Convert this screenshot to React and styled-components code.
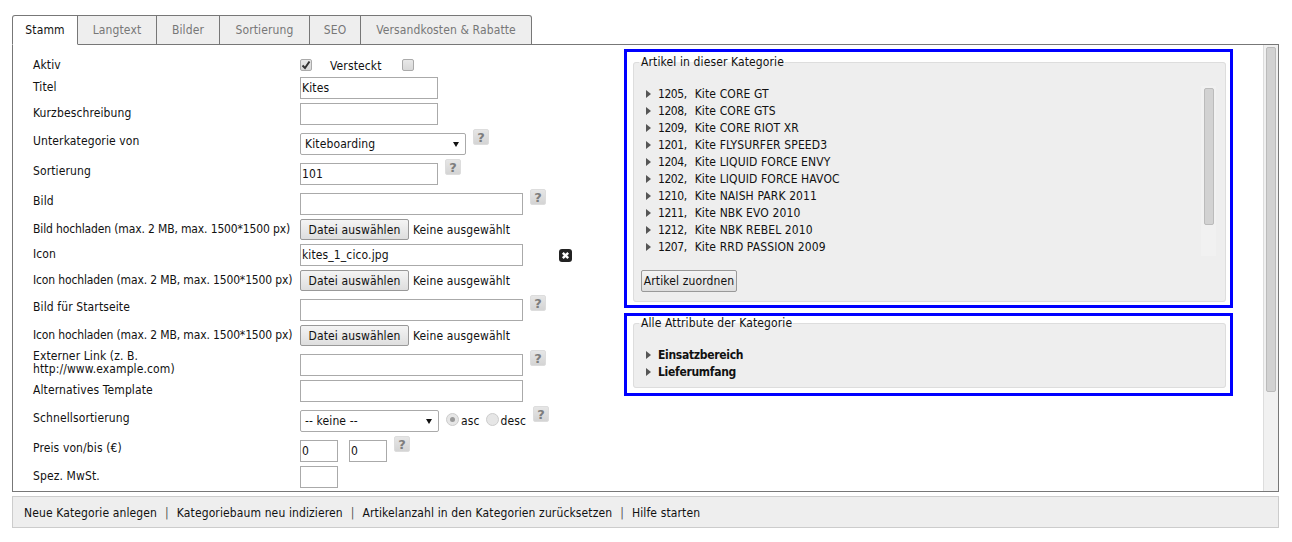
import React from 'react';
import styled, { createGlobalStyle } from 'styled-components';

const Global = createGlobalStyle`
  html, body { margin: 0; padding: 0; background: #fff; }
  body { font-family: "DejaVu Sans Condensed", "DejaVu Sans", sans-serif; font-size: 12px; letter-spacing: 0.12px; color: #111; overflow: hidden; }
`;
const Page = styled.div`
  width: 1267px; margin-left: 12px; padding-top: 15px;
`;
const Tabs = styled.div`
  display: flex; height: 30px; margin-bottom: -1px; position: relative; z-index: 1;
`;
const Tab = styled.div`
  height: 30px; box-sizing: border-box; display: flex; align-items: center; justify-content: center;
  width: ${p => p.$w}px;
  border: 1px solid #777; border-left-width: ${p => p.$first ? 1 : 0}px;
  border-bottom-color: ${p => p.$active ? '#fff' : '#777'};
  background: ${p => p.$active ? '#fff' : '#eee'};
  color: ${p => p.$active ? '#111' : '#777'};
  border-radius: ${p => p.$first ? '3px 0 0 0' : p.$last ? '0 3px 0 0' : '0'};
`;
const Panel = styled.div`
  height: 448px; box-sizing: border-box; border: 1px solid #777; display: flex; overflow: hidden;
`;
const Form = styled.div`
  width: 611px; flex: none; padding: 10px 0 0 20px; box-sizing: border-box;
`;
const Row = styled.div`
  display: grid; grid-template-columns: 267px 1fr; grid-template-rows: 22px; align-items: center; height: 22px; margin-top: ${p => p.$gap || 0}px;
`;
const Label = styled.div`
  line-height: 13px; margin-bottom: ${p => p.$up || 0}px; max-width: ${p => p.$max || 267}px; white-space: ${p => p.$max ? 'normal' : 'nowrap'};
  letter-spacing: ${p => p.$tight ? '-0.14px' : 'inherit'};
`;
const Controls = styled.div`
  display: flex; align-items: center; height: 22px;
`;
const Text = styled.input.attrs({ type: 'text' })`
  box-sizing: border-box; height: 22px; width: ${p => p.$w}px; margin: 0 ${p => p.$mr || 0}px 0 0;
  border: 1px solid #aaa; padding: 0 1px; font: inherit; letter-spacing: inherit; color: #111; background: #fff; outline: none;
`;
const SelectBox = styled.div`
  box-sizing: border-box; height: 22px; width: ${p => p.$w}px; border: 1px solid #aaa; border-radius: 2px;
  display: flex; align-items: center; justify-content: space-between; padding: 0 4px; background: #fff;
`;
const Caret = styled.span`
  width: 0; height: 0; border-left: 3px solid transparent; border-right: 3px solid transparent; border-top: 5px solid #111; margin-right: 2px;
`;
const FileBtn = styled.button`
  box-sizing: border-box; height: 21px; width: 109px; padding: 0; font: inherit; letter-spacing: inherit; color: #111; margin: 0 4px 1px 0;
  border: 1px solid #999; border-radius: 2px; background: linear-gradient(#f4f4f4, #dedede);
`;
const Help = styled.span`
  box-sizing: border-box; width: 16px; height: 16px; margin-left: 7px; margin-bottom: 14px;
  background: linear-gradient(#e6e6e6, #d4d4d4); border: 1px solid #ddd; border-radius: 2px;
  display: flex; align-items: center; justify-content: center; color: #7d7d7d; font: bold 13px "DejaVu Sans", sans-serif; flex: none;
`;
const Check = styled.span`
  box-sizing: border-box; width: 12px; height: 12px; border: 1px solid #aaa; border-radius: 2px; background: linear-gradient(#e8e8e8, #d8d8d8);
  display: flex; align-items: center; justify-content: center; flex: none;
  margin: 0 0 3px ${p => p.$ml || 0}px;
`;
const Hidden = styled.span`
  margin-left: 18px; width: 55px; flex: none;
`;
const Radio = styled.span`
  box-sizing: border-box; width: 13px; height: 13px; border: 1px solid #ccc; border-radius: 50%; background: #e6e6e6;
  display: flex; align-items: center; justify-content: center; flex: none; margin: 0 2px 4px ${p => p.$ml}px;
  &::after { content: ''; display: ${p => p.$on ? 'block' : 'none'}; width: 5px; height: 5px; border-radius: 50%; background: #999; }
`;
const Clear = styled.svg`
  width: 13px; height: 13px; margin-left: 36px; flex: none;
`;
const Side = styled.div`
  width: 609px; flex: none; padding-top: 4px; box-sizing: border-box;
`;
const Group = styled.section`
  box-sizing: border-box; border: 3px solid #00f; height: ${p => p.$h}px; margin-bottom: 5px;
  padding: ${p => p.$pt}px 4px ${p => p.$pb}px 6px;
`;
const Field = styled.fieldset`
  box-sizing: border-box; height: 100%; margin: 0; background: #eee; border: 1px solid #ddd; border-radius: 3px; padding: 0 0 0 5px; min-width: 0;
`;
const Legend = styled.legend`
  padding: 0 1px 0 2px; line-height: 14px;
`;
const ListWrap = styled.div`
  display: flex; height: ${p => p.$h}px; margin-top: 16px;
`;
const List = styled.ul`
  list-style: none; margin: 0; padding: 0 0 0 7px; flex: 1;
`;
const Item = styled.li`
  display: flex; align-items: center; height: 17px; white-space: pre;
  font-weight: ${p => p.$bold ? 700 : 400}; letter-spacing: ${p => p.$bold ? '-0.3px' : 'inherit'};
`;
const ArticleNo = styled.span`
  letter-spacing: -0.45px; margin-right: 8px;
`;
const Arrow = styled.span`
  width: 0; height: 0; border-top: 4px solid transparent; border-bottom: 4px solid transparent; border-left: 5px solid #555; margin-right: 7px; flex: none;
`;
const Track = styled.div`
  box-sizing: border-box; width: 15px; height: 170px; margin: 1px 9px 0 0; background: #f1f1f1; padding: 2px 2px 2px 3px; flex: none;
`;
const Thumb = styled.div`
  height: 137px; background: #d2d2d2; border: 1px solid #bbb; border-radius: 2px; box-sizing: border-box;
`;
const Assign = styled.button`
  box-sizing: border-box; height: 22px; width: 96px; margin: 14px 0 0 2px; padding: 0; font: inherit; letter-spacing: inherit; color: #111;
  border: 1px solid #999; border-radius: 2px; background: linear-gradient(#f4f4f4, #dedede); display: block;
`;
const PageScroll = styled.div`
  width: 15px; background: #f1f1f1; border-left: 1px solid #ddd; box-sizing: border-box; padding: 2px; flex: none; margin-left: auto;
`;
const PageThumb = styled.div`
  height: 345px; background: #d2d2d2; border: 1px solid #bbb; border-radius: 2px; box-sizing: border-box;
`;
const Footer = styled.div`
  box-sizing: border-box; height: 32px; margin-top: 4px; background: #eee; border: 1px solid #ccc; display: flex; align-items: center; padding-left: 11px; gap: 8px;
`;
const FooterLink = styled.span`
  margin-top: 2px;
`;
const Sep = styled.span` color: #555; margin-top: 2px; `;

const Q = () => <Help>?</Help>;
const Tick = () => <svg width="10" height="10" viewBox="0 0 10 10"><path d="M1.5 5.5 L4 8 L8.5 1.5" fill="none" stroke="#333" strokeWidth="2" /></svg>;

const articles = [['1205,','Kite CORE GT'],['1208,','Kite CORE GTS'],['1209,','Kite CORE RIOT XR'],['1201,','Kite FLYSURFER SPEED3'],['1204,','Kite LIQUID FORCE ENVY'],['1202,','Kite LIQUID FORCE HAVOC'],['1210,','Kite NAISH PARK 2011'],['1211,','Kite NBK EVO 2010'],['1212,','Kite NBK REBEL 2010'],['1207,','Kite RRD PASSION 2009']];
const tabs = [['Stamm',66],['Langtext',79],['Bilder',63],['Sortierung',90],['SEO',51],['Versandkosten & Rabatte',171]];
const upload = 'hochladen (max. 2 MB, max. 1500*1500 px)';

export default function App() {
  return (
    <Page>
      <Global />
      <Tabs>
        {tabs.map(([t, w], i) => <Tab key={t} $w={w} $active={i === 0} $first={i === 0} $last={i === 5}>{t}</Tab>)}
      </Tabs>
      <Panel>
        <Form>
          <Row><Label $up={2}>Aktiv</Label><Controls><Check><Tick /></Check><Hidden>Versteckt</Hidden><Check $ml={17} /></Controls></Row>
          <Row><Label $up={2}>Titel</Label><Controls><Text $w={138} defaultValue="Kites" /></Controls></Row>
          <Row $gap={4}><Label $up={2}>Kurzbeschreibung</Label><Controls><Text $w={138} /></Controls></Row>
          <Row $gap={8}><Label $up={6}>Unterkategorie von</Label><Controls><SelectBox $w={166}>Kiteboarding<Caret /></SelectBox><Q /></Controls></Row>
          <Row $gap={8}><Label $up={6}>Sortierung</Label><Controls><Text $w={138} defaultValue="101" /><Q /></Controls></Row>
          <Row $gap={8}><Label $up={6}>Bild</Label><Controls><Text $w={223} /><Q /></Controls></Row>
          <Row $gap={4}><Label $up={2} $tight>Bild {upload}</Label><Controls><FileBtn>Datei auswählen</FileBtn>Keine ausgewählt</Controls></Row>
          <Row $gap={3}><Label $up={2}>Icon</Label><Controls><Text $w={223} defaultValue="kites_1_cico.jpg" /><Clear viewBox="0 0 13 13"><rect width="13" height="13" rx="3" fill="#222" /><path d="M3.8 3.8 L9.2 9.2 M9.2 3.8 L3.8 9.2" stroke="#fff" strokeWidth="2.4" /></Clear></Controls></Row>
          <Row $gap={4}><Label $up={2} $tight>Icon {upload}</Label><Controls><FileBtn>Datei auswählen</FileBtn>Keine ausgewählt</Controls></Row>
          <Row $gap={7}><Label $up={6}>Bild für Startseite</Label><Controls><Text $w={223} /><Q /></Controls></Row>
          <Row $gap={4}><Label $up={2} $tight>Icon {upload}</Label><Controls><FileBtn>Datei auswählen</FileBtn>Keine ausgewählt</Controls></Row>
          <Row $gap={7}><Label $up={5} $max={200}>Externer Link (z. B. http://www.example.com)</Label><Controls><Text $w={223} /><Q /></Controls></Row>
          <Row $gap={4}><Label $up={2}>Alternatives Template</Label><Controls><Text $w={223} /></Controls></Row>
          <Row $gap={8}><Label $up={6}>Schnellsortierung</Label><Controls><SelectBox $w={139}>-- keine --<Caret /></SelectBox><Radio $ml={7} $on />asc<Radio $ml={6} />desc<Q /></Controls></Row>
          <Row $gap={8}><Label $up={6}>Preis von/bis (€)</Label><Controls><Text $w={38} $mr={11} defaultValue="0" /><Text $w={38} defaultValue="0" /><Q /></Controls></Row>
          <Row $gap={4}><Label $up={2}>Spez. MwSt.</Label><Controls><Text $w={38} /></Controls></Row>
        </Form>
        <Side>
          <Group $h={259} $pt={3} $pb={3}>
            <Field>
              <Legend>Artikel in dieser Kategorie</Legend>
              <ListWrap $h={171}>
                <List>{articles.map(([no, name]) => <Item key={no}><Arrow /><ArticleNo>{no}</ArticleNo>{name}</Item>)}</List>
                <Track><Thumb /></Track>
              </ListWrap>
              <Assign>Artikel zuordnen</Assign>
            </Field>
          </Group>
          <Group $h={83} $pt={0} $pb={5}>
            <Field>
              <Legend>Alle Attribute der Kategorie</Legend>
              <ListWrap $h={34}>
                <List><Item $bold><Arrow />Einsatzbereich</Item><Item $bold><Arrow />Lieferumfang</Item></List>
              </ListWrap>
            </Field>
          </Group>
        </Side>
        <PageScroll><PageThumb /></PageScroll>
      </Panel>
      <Footer>
        <FooterLink>Neue Kategorie anlegen</FooterLink><Sep>|</Sep><FooterLink>Kategoriebaum neu indizieren</FooterLink><Sep>|</Sep><FooterLink>Artikelanzahl in den Kategorien zurücksetzen</FooterLink><Sep>|</Sep><FooterLink>Hilfe starten</FooterLink>
      </Footer>
    </Page>
  );
}
